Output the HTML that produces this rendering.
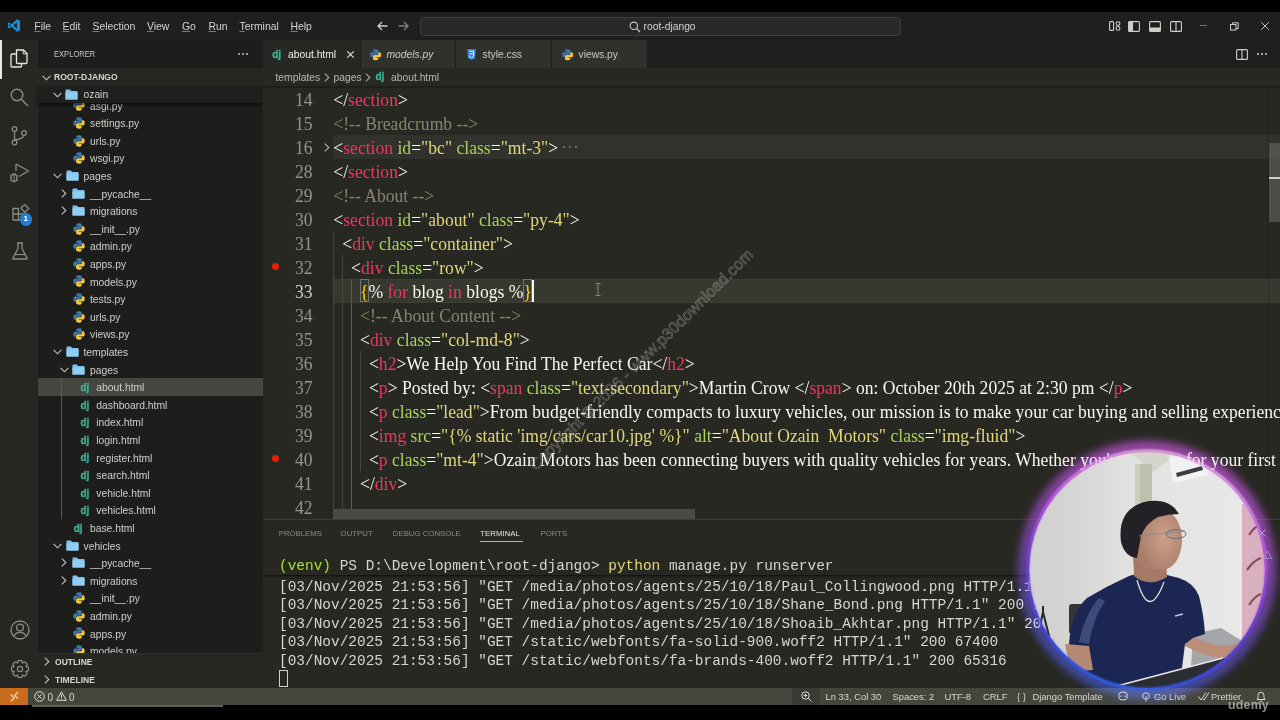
<!DOCTYPE html>
<html><head><meta charset="utf-8"><style>
*{box-sizing:border-box;margin:0;padding:0}
html,body{width:1280px;height:720px;overflow:hidden;background:#000}
body{position:relative;font-family:"Liberation Sans",sans-serif;color:#ccc}
.abs{position:absolute}
svg{position:absolute;overflow:visible}
#title{left:0;top:12px;width:1280px;height:28px;background:#1f1f1d}
.menu{position:absolute;top:20px;font-size:10.4px;color:#d2d2ce;line-height:13px;white-space:nowrap}
#act{left:0;top:40px;width:38px;height:648px;background:#262622}
#side{left:38px;top:40px;width:225px;height:648px;background:#1d1e1b;overflow:hidden}
.row{position:absolute;left:0;width:225px;height:17.6px;font-size:10.3px;line-height:17.6px;color:#cfcfca;white-space:nowrap}
.row span.tx{position:absolute;top:0}
.dj{position:absolute;font-family:"Liberation Sans",sans-serif;font-weight:bold;color:#3fae98;font-size:10px;letter-spacing:-0.2px;line-height:12px;-webkit-text-stroke:0.35px #3fae98}
#editor{left:263px;top:40px;width:1017px;height:479px;background:#272822;overflow:hidden}
.tab{position:absolute;top:0;height:27.5px;background:#30312c}
.tabt{position:absolute;font-size:10.3px;color:#c9c9c4;line-height:13px;white-space:nowrap}
.ln{position:absolute;left:0;width:49.5px;text-align:right;margin-top:1.2px;transform:scaleY(1.058);transform-origin:0 17.94px;font-family:"Liberation Serif",serif;font-size:17.6px;color:#8f8f89;line-height:24px}
.cl{position:absolute;left:70px;white-space:pre;margin-top:1.0px;transform:scaleY(1.058);transform-origin:0 17.94px;font-family:"Liberation Serif",serif;font-size:17.6px;color:#f8f8f2;line-height:24px}
.t{color:#ec3663}.a{color:#a6d55a}.s{color:#e3d778}.c{color:#88846f}.p{color:#f8f8f2}.y{color:#ffd700}
#panel{left:263px;top:519px;width:1017px;height:169px;background:#272822;overflow:hidden}
.ptab{position:absolute;top:529px;font-size:7.8px;color:#8a8a85;line-height:9px;white-space:nowrap}
.term{position:absolute;left:17px;white-space:pre;font-family:"Liberation Mono",monospace;font-size:14.44px;line-height:18.6px;color:#d6d6d0;transform:scaleY(1.07);transform-origin:0 50%}
#status{left:0;top:688px;width:1280px;height:17px;background:#44453d}
.st{position:absolute;top:692px;font-size:9.4px;color:#d8d8d2;line-height:10px;white-space:nowrap}
</style></head><body>
<div id="title" class="abs"></div>
<svg style="left:7px;top:19px" width="14" height="13" viewBox="0 0 100 100"><path fill="#1f8ad2" d="M72 2 L97 14 V86 L72 98 L31 60 L13 74 L3 69 V31 L13 26 L31 40 Z M72 27 L45 50 L72 73 Z M13 37 V63 L26 50 Z"/></svg>
<div class="menu" style="left:34.3px"><u style="text-decoration-color:#7a7a76">F</u>ile</div>
<div class="menu" style="left:62.5px"><u style="text-decoration-color:#7a7a76">E</u>dit</div>
<div class="menu" style="left:92.5px"><u style="text-decoration-color:#7a7a76">S</u>election</div>
<div class="menu" style="left:147px"><u style="text-decoration-color:#7a7a76">V</u>iew</div>
<div class="menu" style="left:182px"><u style="text-decoration-color:#7a7a76">G</u>o</div>
<div class="menu" style="left:208.5px"><u style="text-decoration-color:#7a7a76">R</u>un</div>
<div class="menu" style="left:239.5px"><u style="text-decoration-color:#7a7a76">T</u>erminal</div>
<div class="menu" style="left:290.5px"><u style="text-decoration-color:#7a7a76">H</u>elp</div>
<svg style="left:377px;top:21px" width="11" height="10" viewBox="0 0 11 10"><path d="M10.5 5H1.2M5 1 L1 5 L5 9" stroke="#d0d0cc" stroke-width="1.3" fill="none"/></svg>
<svg style="left:397.5px;top:21px" width="11" height="10" viewBox="0 0 11 10"><path d="M0.5 5H9.8M6 1 L10 5 L6 9" stroke="#7d7d79" stroke-width="1.3" fill="none"/></svg>
<div class="abs" style="left:420px;top:17px;width:481px;height:19px;border:1px solid #3d3d3a;border-radius:4px;background:#292927"></div>
<svg style="left:629px;top:20.5px" width="12" height="12" viewBox="0 0 12 12"><circle cx="4.8" cy="4.8" r="3.7" stroke="#c8c8c4" stroke-width="1.1" fill="none"/><path d="M7.5 7.5 L11 11" stroke="#c8c8c4" stroke-width="1.2"/></svg>
<div class="abs" style="left:643.5px;top:20px;font-size:10.3px;color:#d4d4d0;line-height:13px">root-django</div>
<svg style="left:1108.5px;top:21px" width="12" height="10" viewBox="0 0 12 10"><rect x="0.6" y="0.6" width="4" height="8.8" rx="1" stroke="#cfcfca" stroke-width="1.1" fill="none"/><circle cx="9" cy="2.6" r="1.9" stroke="#cfcfca" stroke-width="1.1" fill="none"/><circle cx="9" cy="7.4" r="1.9" stroke="#cfcfca" stroke-width="1.1" fill="none"/></svg>
<svg style="left:1128px;top:21px" width="12" height="11" viewBox="0 0 12 11"><rect x="0.6" y="0.6" width="10.8" height="9.8" rx="1" stroke="#cfcfca" stroke-width="1.1" fill="none"/><rect x="0.6" y="0.6" width="4.5" height="9.8" fill="#cfcfca"/></svg>
<svg style="left:1149px;top:21px" width="12" height="11" viewBox="0 0 12 11"><rect x="0.6" y="0.6" width="10.8" height="9.8" rx="1" stroke="#cfcfca" stroke-width="1.1" fill="none"/><rect x="0.6" y="6.5" width="10.8" height="3.9" fill="#cfcfca"/></svg>
<svg style="left:1170px;top:21px" width="12" height="11" viewBox="0 0 12 11"><rect x="0.6" y="0.6" width="10.8" height="9.8" rx="1" stroke="#cfcfca" stroke-width="1.1" fill="none"/><path d="M6 0.6V10.4" stroke="#cfcfca" stroke-width="1.1"/></svg>
<div class="abs" style="left:1200px;top:24.5px;width:7px;height:1px;background:#6f6f6b"></div>
<svg style="left:1230px;top:21.5px" width="9" height="9" viewBox="0 0 9 9"><rect x="0.5" y="2.5" width="5.5" height="5.5" stroke="#cfcfca" stroke-width="1" fill="none"/><path d="M2.5 2.5V0.8H8.2V6.5H6" stroke="#cfcfca" stroke-width="1" fill="none"/></svg>
<svg style="left:1261px;top:22px" width="8" height="8" viewBox="0 0 8 8"><path d="M0.3 0.3L7.7 7.7M7.7 0.3L0.3 7.7" stroke="#d6d6d2" stroke-width="0.9"/></svg>
<div id="act" class="abs"></div>
<div class="abs" style="left:0;top:40px;width:1.6px;height:39px;background:#e8e8e4"></div>
<svg style="left:10px;top:49px" width="18" height="19" viewBox="0 0 18 19"><path d="M6.5 1 H13.5 L17 4.5 V13.5 Q17 14.5 16 14.5 H7.5 Q6.5 14.5 6.5 13.5 Z" stroke="#e6e6e2" stroke-width="1.3" fill="none"/><path d="M13.2 1.2 V4.8 H16.8" stroke="#e6e6e2" stroke-width="1" fill="none"/><path d="M6.5 5 H2 Q1 5 1 6 V17 Q1 18 2 18 H10.5 Q11.5 18 11.5 17 V14.5" stroke="#e6e6e2" stroke-width="1.3" fill="none"/></svg>
<svg style="left:10px;top:88px" width="19" height="19" viewBox="0 0 19 19"><circle cx="7" cy="7" r="5.8" stroke="#8c8c87" stroke-width="1.4" fill="none"/><path d="M11.3 11.3 L18 18" stroke="#8c8c87" stroke-width="1.5"/></svg>
<svg style="left:11px;top:126px" width="17" height="20" viewBox="0 0 17 20"><circle cx="3.5" cy="3" r="2.3" stroke="#8c8c87" stroke-width="1.3" fill="none"/><circle cx="3.5" cy="16.5" r="2.3" stroke="#8c8c87" stroke-width="1.3" fill="none"/><circle cx="13" cy="7" r="2.3" stroke="#8c8c87" stroke-width="1.3" fill="none"/><path d="M3.5 5.3 V14.2 M13 9.3 Q13 12.5 3.8 14" stroke="#8c8c87" stroke-width="1.3" fill="none"/></svg>
<svg style="left:9px;top:163px" width="20" height="20" viewBox="0 0 20 20"><path d="M7 1 L19.5 8 L10 13.5" stroke="#8c8c87" stroke-width="1.3" fill="none" stroke-linejoin="round"/><path d="M7 1 V8" stroke="#8c8c87" stroke-width="1.3"/><ellipse cx="5" cy="15" rx="3" ry="3.6" stroke="#8c8c87" stroke-width="1.2" fill="none"/><path d="M1 12.5 L2.4 13.3 M1 15 H2 M1 17.8 L2.4 17 M9 12.5 L7.6 13.3 M9 15 H8 M9 17.8 L7.6 17 M5 11.4 V18.6 M3.5 10 L4.5 11.5 M6.5 10 L5.5 11.5" stroke="#8c8c87" stroke-width="1" fill="none"/></svg>
<svg style="left:11.5px;top:203.5px" width="18" height="17" viewBox="0 0 18 17"><path d="M1 4.5 H6.5 V10 H12 V16 H1 Z M1 10 H6.5 V16 M9 4 L12.5 0.6 L16.8 4.5 L12.5 8.4 Z" stroke="#8c8c87" stroke-width="1.3" fill="none" stroke-linejoin="round"/></svg>
<div class="abs" style="left:19.5px;top:213px;width:12.5px;height:12.5px;border-radius:50%;background:#1f7fd4;color:#fff;font-size:8px;font-weight:bold;line-height:12.5px;text-align:center">1</div>
<svg style="left:11.5px;top:242px" width="16" height="18" viewBox="0 0 16 18"><path d="M5 1 H11 M6 1 V6.5 L1 16 Q0.7 17 1.8 17 H14.2 Q15.3 17 15 16 L10 6.5 V1" stroke="#8c8c87" stroke-width="1.3" fill="none" stroke-linejoin="round"/><path d="M3 12.5 H13" stroke="#8c8c87" stroke-width="1.2"/></svg>
<svg style="left:9.5px;top:620px" width="20" height="20" viewBox="0 0 20 20"><circle cx="10" cy="10" r="9" stroke="#8c8c87" stroke-width="1.3" fill="none"/><circle cx="10" cy="7.5" r="3.4" stroke="#8c8c87" stroke-width="1.3" fill="none"/><path d="M4 16.3 Q5.5 12.3 10 12.3 Q14.5 12.3 16 16.3" stroke="#8c8c87" stroke-width="1.3" fill="none"/></svg>
<svg style="left:10px;top:659px" width="20" height="20" viewBox="0 0 20 20"><path d="M18.39 8.12 L18.39 11.88 L15.84 12.61 L15.98 12.29 L17.26 14.61 L14.61 17.26 L12.29 15.98 L12.61 15.84 L11.88 18.39 L8.12 18.39 L7.39 15.84 L7.71 15.98 L5.39 17.26 L2.74 14.61 L4.02 12.29 L4.16 12.61 L1.61 11.88 L1.61 8.12 L4.16 7.39 L4.02 7.71 L2.74 5.39 L5.39 2.74 L7.71 4.02 L7.39 4.16 L8.12 1.61 L11.88 1.61 L12.61 4.16 L12.29 4.02 L14.61 2.74 L17.26 5.39 L15.98 7.71 L15.84 7.39Z" stroke="#8c8c87" stroke-width="1.2" fill="none" stroke-linejoin="round"/><circle cx="10" cy="10" r="2.6" stroke="#8c8c87" stroke-width="1.2" fill="none"/></svg>
<div id="side" class="abs"></div>
<div class="abs" style="left:54.3px;top:49.5px;font-size:8.4px;color:#c8c8c3;line-height:9px;letter-spacing:0.1px;transform:scaleX(0.89);transform-origin:0 50%">EXPLORER</div>
<div class="abs" style="left:238px;top:53px;width:2px;height:2px;background:#c8c8c3;border-radius:1px"></div>
<div class="abs" style="left:242px;top:53px;width:2px;height:2px;background:#c8c8c3;border-radius:1px"></div>
<div class="abs" style="left:246px;top:53px;width:2px;height:2px;background:#c8c8c3;border-radius:1px"></div>
<div class="abs" style="left:38px;top:103px;width:225px;height:549.5px;overflow:hidden;background:#1d1e1b">
<svg style="left:34.8px;top:-3.6999999999999993px" width="12" height="12" viewBox="0 0 12 12"><path d="M5.9 0.3 C3.2 0.3 3.4 1.5 3.4 1.5 V2.9 H6.1 V3.4 H2.2 C2.2 3.4 0.3 3.2 0.3 6 C0.3 8.8 2 8.7 2 8.7 H3 V7.4 C3 7.4 2.9 5.7 4.7 5.7 H7.3 C7.3 5.7 8.9 5.7 8.9 4.1 V1.9 C8.9 1.9 9.2 0.3 5.9 0.3 Z" fill="#3b77a8"/><path d="M6.1 11.7 C8.8 11.7 8.6 10.5 8.6 10.5 V9.1 H5.9 V8.6 H9.8 C9.8 8.6 11.7 8.8 11.7 6 C11.7 3.2 10 3.3 10 3.3 H9 V4.6 C9 4.6 9.1 6.3 7.3 6.3 H4.7 C4.7 6.3 3.1 6.3 3.1 7.9 V10.1 C3.1 10.1 2.8 11.7 6.1 11.7 Z" fill="#f3c93c"/></svg>
<div class="row" style="top:-5.50px"><span class="tx" style="left:52px">asgi.py</span></div>
<svg style="left:34.8px;top:13.900000000000002px" width="12" height="12" viewBox="0 0 12 12"><path d="M5.9 0.3 C3.2 0.3 3.4 1.5 3.4 1.5 V2.9 H6.1 V3.4 H2.2 C2.2 3.4 0.3 3.2 0.3 6 C0.3 8.8 2 8.7 2 8.7 H3 V7.4 C3 7.4 2.9 5.7 4.7 5.7 H7.3 C7.3 5.7 8.9 5.7 8.9 4.1 V1.9 C8.9 1.9 9.2 0.3 5.9 0.3 Z" fill="#3b77a8"/><path d="M6.1 11.7 C8.8 11.7 8.6 10.5 8.6 10.5 V9.1 H5.9 V8.6 H9.8 C9.8 8.6 11.7 8.8 11.7 6 C11.7 3.2 10 3.3 10 3.3 H9 V4.6 C9 4.6 9.1 6.3 7.3 6.3 H4.7 C4.7 6.3 3.1 6.3 3.1 7.9 V10.1 C3.1 10.1 2.8 11.7 6.1 11.7 Z" fill="#f3c93c"/></svg>
<div class="row" style="top:12.10px"><span class="tx" style="left:52px">settings.py</span></div>
<svg style="left:34.8px;top:31.5px" width="12" height="12" viewBox="0 0 12 12"><path d="M5.9 0.3 C3.2 0.3 3.4 1.5 3.4 1.5 V2.9 H6.1 V3.4 H2.2 C2.2 3.4 0.3 3.2 0.3 6 C0.3 8.8 2 8.7 2 8.7 H3 V7.4 C3 7.4 2.9 5.7 4.7 5.7 H7.3 C7.3 5.7 8.9 5.7 8.9 4.1 V1.9 C8.9 1.9 9.2 0.3 5.9 0.3 Z" fill="#3b77a8"/><path d="M6.1 11.7 C8.8 11.7 8.6 10.5 8.6 10.5 V9.1 H5.9 V8.6 H9.8 C9.8 8.6 11.7 8.8 11.7 6 C11.7 3.2 10 3.3 10 3.3 H9 V4.6 C9 4.6 9.1 6.3 7.3 6.3 H4.7 C4.7 6.3 3.1 6.3 3.1 7.9 V10.1 C3.1 10.1 2.8 11.7 6.1 11.7 Z" fill="#f3c93c"/></svg>
<div class="row" style="top:29.70px"><span class="tx" style="left:52px">urls.py</span></div>
<svg style="left:34.8px;top:49.10000000000001px" width="12" height="12" viewBox="0 0 12 12"><path d="M5.9 0.3 C3.2 0.3 3.4 1.5 3.4 1.5 V2.9 H6.1 V3.4 H2.2 C2.2 3.4 0.3 3.2 0.3 6 C0.3 8.8 2 8.7 2 8.7 H3 V7.4 C3 7.4 2.9 5.7 4.7 5.7 H7.3 C7.3 5.7 8.9 5.7 8.9 4.1 V1.9 C8.9 1.9 9.2 0.3 5.9 0.3 Z" fill="#3b77a8"/><path d="M6.1 11.7 C8.8 11.7 8.6 10.5 8.6 10.5 V9.1 H5.9 V8.6 H9.8 C9.8 8.6 11.7 8.8 11.7 6 C11.7 3.2 10 3.3 10 3.3 H9 V4.6 C9 4.6 9.1 6.3 7.3 6.3 H4.7 C4.7 6.3 3.1 6.3 3.1 7.9 V10.1 C3.1 10.1 2.8 11.7 6.1 11.7 Z" fill="#f3c93c"/></svg>
<div class="row" style="top:47.30px"><span class="tx" style="left:52px">wsgi.py</span></div>
<svg style="left:15px;top:70.2px" width="9" height="6" viewBox="0 0 9 6"><path d="M0.6 0.8 L4.5 4.8 L8.4 0.8" stroke="#c5c5c0" stroke-width="1.1" fill="none"/></svg>
<svg style="left:28px;top:67.2px" width="13" height="11" viewBox="0 0 13 11"><path d="M0.5 1.3 Q0.5 0.5 1.3 0.5 H4.8 L6.2 2 H11.7 Q12.5 2 12.5 2.8 V10 Q12.5 10.5 12 10.5 H1 Q0.5 10.5 0.5 10 Z" fill="#7fc1ec"/><path d="M0.5 3.5 H12.5 V10 Q12.5 10.5 12 10.5 H1 Q0.5 10.5 0.5 10 Z" fill="#90cdf4"/></svg>
<div class="row" style="top:64.90px"><span class="tx" style="left:45.5px">pages</span></div>
<svg style="left:23px;top:85.8px" width="6" height="9" viewBox="0 0 6 9"><path d="M0.8 0.6 L4.8 4.5 L0.8 8.4" stroke="#c5c5c0" stroke-width="1.1" fill="none"/></svg>
<svg style="left:34px;top:84.8px" width="13" height="11" viewBox="0 0 13 11"><path d="M0.5 1.3 Q0.5 0.5 1.3 0.5 H4.8 L6.2 2 H11.7 Q12.5 2 12.5 2.8 V10 Q12.5 10.5 12 10.5 H1 Q0.5 10.5 0.5 10 Z" fill="#7fc1ec"/><path d="M0.5 3.5 H12.5 V10 Q12.5 10.5 12 10.5 H1 Q0.5 10.5 0.5 10 Z" fill="#90cdf4"/></svg>
<div class="row" style="top:82.50px"><span class="tx" style="left:52px">__pycache__</span></div>
<svg style="left:23px;top:103.4px" width="6" height="9" viewBox="0 0 6 9"><path d="M0.8 0.6 L4.8 4.5 L0.8 8.4" stroke="#c5c5c0" stroke-width="1.1" fill="none"/></svg>
<svg style="left:34px;top:102.4px" width="13" height="11" viewBox="0 0 13 11"><path d="M0.5 1.3 Q0.5 0.5 1.3 0.5 H4.8 L6.2 2 H11.7 Q12.5 2 12.5 2.8 V10 Q12.5 10.5 12 10.5 H1 Q0.5 10.5 0.5 10 Z" fill="#7fc1ec"/><path d="M0.5 3.5 H12.5 V10 Q12.5 10.5 12 10.5 H1 Q0.5 10.5 0.5 10 Z" fill="#90cdf4"/></svg>
<div class="row" style="top:100.10px"><span class="tx" style="left:52px">migrations</span></div>
<svg style="left:34.8px;top:119.50000000000001px" width="12" height="12" viewBox="0 0 12 12"><path d="M5.9 0.3 C3.2 0.3 3.4 1.5 3.4 1.5 V2.9 H6.1 V3.4 H2.2 C2.2 3.4 0.3 3.2 0.3 6 C0.3 8.8 2 8.7 2 8.7 H3 V7.4 C3 7.4 2.9 5.7 4.7 5.7 H7.3 C7.3 5.7 8.9 5.7 8.9 4.1 V1.9 C8.9 1.9 9.2 0.3 5.9 0.3 Z" fill="#3b77a8"/><path d="M6.1 11.7 C8.8 11.7 8.6 10.5 8.6 10.5 V9.1 H5.9 V8.6 H9.8 C9.8 8.6 11.7 8.8 11.7 6 C11.7 3.2 10 3.3 10 3.3 H9 V4.6 C9 4.6 9.1 6.3 7.3 6.3 H4.7 C4.7 6.3 3.1 6.3 3.1 7.9 V10.1 C3.1 10.1 2.8 11.7 6.1 11.7 Z" fill="#f3c93c"/></svg>
<div class="row" style="top:117.70px"><span class="tx" style="left:52px">__init__.py</span></div>
<svg style="left:34.8px;top:137.10000000000002px" width="12" height="12" viewBox="0 0 12 12"><path d="M5.9 0.3 C3.2 0.3 3.4 1.5 3.4 1.5 V2.9 H6.1 V3.4 H2.2 C2.2 3.4 0.3 3.2 0.3 6 C0.3 8.8 2 8.7 2 8.7 H3 V7.4 C3 7.4 2.9 5.7 4.7 5.7 H7.3 C7.3 5.7 8.9 5.7 8.9 4.1 V1.9 C8.9 1.9 9.2 0.3 5.9 0.3 Z" fill="#3b77a8"/><path d="M6.1 11.7 C8.8 11.7 8.6 10.5 8.6 10.5 V9.1 H5.9 V8.6 H9.8 C9.8 8.6 11.7 8.8 11.7 6 C11.7 3.2 10 3.3 10 3.3 H9 V4.6 C9 4.6 9.1 6.3 7.3 6.3 H4.7 C4.7 6.3 3.1 6.3 3.1 7.9 V10.1 C3.1 10.1 2.8 11.7 6.1 11.7 Z" fill="#f3c93c"/></svg>
<div class="row" style="top:135.30px"><span class="tx" style="left:52px">admin.py</span></div>
<svg style="left:34.8px;top:154.70000000000002px" width="12" height="12" viewBox="0 0 12 12"><path d="M5.9 0.3 C3.2 0.3 3.4 1.5 3.4 1.5 V2.9 H6.1 V3.4 H2.2 C2.2 3.4 0.3 3.2 0.3 6 C0.3 8.8 2 8.7 2 8.7 H3 V7.4 C3 7.4 2.9 5.7 4.7 5.7 H7.3 C7.3 5.7 8.9 5.7 8.9 4.1 V1.9 C8.9 1.9 9.2 0.3 5.9 0.3 Z" fill="#3b77a8"/><path d="M6.1 11.7 C8.8 11.7 8.6 10.5 8.6 10.5 V9.1 H5.9 V8.6 H9.8 C9.8 8.6 11.7 8.8 11.7 6 C11.7 3.2 10 3.3 10 3.3 H9 V4.6 C9 4.6 9.1 6.3 7.3 6.3 H4.7 C4.7 6.3 3.1 6.3 3.1 7.9 V10.1 C3.1 10.1 2.8 11.7 6.1 11.7 Z" fill="#f3c93c"/></svg>
<div class="row" style="top:152.90px"><span class="tx" style="left:52px">apps.py</span></div>
<svg style="left:34.8px;top:172.3px" width="12" height="12" viewBox="0 0 12 12"><path d="M5.9 0.3 C3.2 0.3 3.4 1.5 3.4 1.5 V2.9 H6.1 V3.4 H2.2 C2.2 3.4 0.3 3.2 0.3 6 C0.3 8.8 2 8.7 2 8.7 H3 V7.4 C3 7.4 2.9 5.7 4.7 5.7 H7.3 C7.3 5.7 8.9 5.7 8.9 4.1 V1.9 C8.9 1.9 9.2 0.3 5.9 0.3 Z" fill="#3b77a8"/><path d="M6.1 11.7 C8.8 11.7 8.6 10.5 8.6 10.5 V9.1 H5.9 V8.6 H9.8 C9.8 8.6 11.7 8.8 11.7 6 C11.7 3.2 10 3.3 10 3.3 H9 V4.6 C9 4.6 9.1 6.3 7.3 6.3 H4.7 C4.7 6.3 3.1 6.3 3.1 7.9 V10.1 C3.1 10.1 2.8 11.7 6.1 11.7 Z" fill="#f3c93c"/></svg>
<div class="row" style="top:170.50px"><span class="tx" style="left:52px">models.py</span></div>
<svg style="left:34.8px;top:189.90000000000003px" width="12" height="12" viewBox="0 0 12 12"><path d="M5.9 0.3 C3.2 0.3 3.4 1.5 3.4 1.5 V2.9 H6.1 V3.4 H2.2 C2.2 3.4 0.3 3.2 0.3 6 C0.3 8.8 2 8.7 2 8.7 H3 V7.4 C3 7.4 2.9 5.7 4.7 5.7 H7.3 C7.3 5.7 8.9 5.7 8.9 4.1 V1.9 C8.9 1.9 9.2 0.3 5.9 0.3 Z" fill="#3b77a8"/><path d="M6.1 11.7 C8.8 11.7 8.6 10.5 8.6 10.5 V9.1 H5.9 V8.6 H9.8 C9.8 8.6 11.7 8.8 11.7 6 C11.7 3.2 10 3.3 10 3.3 H9 V4.6 C9 4.6 9.1 6.3 7.3 6.3 H4.7 C4.7 6.3 3.1 6.3 3.1 7.9 V10.1 C3.1 10.1 2.8 11.7 6.1 11.7 Z" fill="#f3c93c"/></svg>
<div class="row" style="top:188.10px"><span class="tx" style="left:52px">tests.py</span></div>
<svg style="left:34.8px;top:207.50000000000003px" width="12" height="12" viewBox="0 0 12 12"><path d="M5.9 0.3 C3.2 0.3 3.4 1.5 3.4 1.5 V2.9 H6.1 V3.4 H2.2 C2.2 3.4 0.3 3.2 0.3 6 C0.3 8.8 2 8.7 2 8.7 H3 V7.4 C3 7.4 2.9 5.7 4.7 5.7 H7.3 C7.3 5.7 8.9 5.7 8.9 4.1 V1.9 C8.9 1.9 9.2 0.3 5.9 0.3 Z" fill="#3b77a8"/><path d="M6.1 11.7 C8.8 11.7 8.6 10.5 8.6 10.5 V9.1 H5.9 V8.6 H9.8 C9.8 8.6 11.7 8.8 11.7 6 C11.7 3.2 10 3.3 10 3.3 H9 V4.6 C9 4.6 9.1 6.3 7.3 6.3 H4.7 C4.7 6.3 3.1 6.3 3.1 7.9 V10.1 C3.1 10.1 2.8 11.7 6.1 11.7 Z" fill="#f3c93c"/></svg>
<div class="row" style="top:205.70px"><span class="tx" style="left:52px">urls.py</span></div>
<svg style="left:34.8px;top:225.10000000000002px" width="12" height="12" viewBox="0 0 12 12"><path d="M5.9 0.3 C3.2 0.3 3.4 1.5 3.4 1.5 V2.9 H6.1 V3.4 H2.2 C2.2 3.4 0.3 3.2 0.3 6 C0.3 8.8 2 8.7 2 8.7 H3 V7.4 C3 7.4 2.9 5.7 4.7 5.7 H7.3 C7.3 5.7 8.9 5.7 8.9 4.1 V1.9 C8.9 1.9 9.2 0.3 5.9 0.3 Z" fill="#3b77a8"/><path d="M6.1 11.7 C8.8 11.7 8.6 10.5 8.6 10.5 V9.1 H5.9 V8.6 H9.8 C9.8 8.6 11.7 8.8 11.7 6 C11.7 3.2 10 3.3 10 3.3 H9 V4.6 C9 4.6 9.1 6.3 7.3 6.3 H4.7 C4.7 6.3 3.1 6.3 3.1 7.9 V10.1 C3.1 10.1 2.8 11.7 6.1 11.7 Z" fill="#f3c93c"/></svg>
<div class="row" style="top:223.30px"><span class="tx" style="left:52px">views.py</span></div>
<svg style="left:15px;top:246.20000000000005px" width="9" height="6" viewBox="0 0 9 6"><path d="M0.6 0.8 L4.5 4.8 L8.4 0.8" stroke="#c5c5c0" stroke-width="1.1" fill="none"/></svg>
<svg style="left:28px;top:243.20000000000005px" width="13" height="11" viewBox="0 0 13 11"><path d="M0.5 1.3 Q0.5 0.5 1.3 0.5 H4.8 L6.2 2 H11.7 Q12.5 2 12.5 2.8 V10 Q12.5 10.5 12 10.5 H1 Q0.5 10.5 0.5 10 Z" fill="#7fc1ec"/><path d="M0.5 3.5 H12.5 V10 Q12.5 10.5 12 10.5 H1 Q0.5 10.5 0.5 10 Z" fill="#90cdf4"/></svg>
<div class="row" style="top:240.90px"><span class="tx" style="left:45.5px">templates</span></div>
<svg style="left:22px;top:263.8px" width="9" height="6" viewBox="0 0 9 6"><path d="M0.6 0.8 L4.5 4.8 L8.4 0.8" stroke="#c5c5c0" stroke-width="1.1" fill="none"/></svg>
<svg style="left:34px;top:260.8px" width="13" height="11" viewBox="0 0 13 11"><path d="M0.5 1.3 Q0.5 0.5 1.3 0.5 H4.8 L6.2 2 H11.7 Q12.5 2 12.5 2.8 V10 Q12.5 10.5 12 10.5 H1 Q0.5 10.5 0.5 10 Z" fill="#7fc1ec"/><path d="M0.5 3.5 H12.5 V10 Q12.5 10.5 12 10.5 H1 Q0.5 10.5 0.5 10 Z" fill="#90cdf4"/></svg>
<div class="row" style="top:258.50px"><span class="tx" style="left:52px">pages</span></div>
<div class="abs" style="left:0;top:275.10px;width:225px;height:17.6px;background:#45463f"></div>
<div class="dj" style="left:42.5px;top:278.90000000000003px">dj</div>
<div class="row" style="top:276.10px"><span class="tx" style="left:58.3px">about.html</span></div>
<div class="dj" style="left:42.5px;top:296.50000000000006px">dj</div>
<div class="row" style="top:293.70px"><span class="tx" style="left:58.3px">dashboard.html</span></div>
<div class="dj" style="left:42.5px;top:314.1px">dj</div>
<div class="row" style="top:311.30px"><span class="tx" style="left:58.3px">index.html</span></div>
<div class="dj" style="left:42.5px;top:331.70000000000005px">dj</div>
<div class="row" style="top:328.90px"><span class="tx" style="left:58.3px">login.html</span></div>
<div class="dj" style="left:42.5px;top:349.3px">dj</div>
<div class="row" style="top:346.50px"><span class="tx" style="left:58.3px">register.html</span></div>
<div class="dj" style="left:42.5px;top:366.90000000000003px">dj</div>
<div class="row" style="top:364.10px"><span class="tx" style="left:58.3px">search.html</span></div>
<div class="dj" style="left:42.5px;top:384.50000000000006px">dj</div>
<div class="row" style="top:381.70px"><span class="tx" style="left:58.3px">vehicle.html</span></div>
<div class="dj" style="left:42.5px;top:402.1px">dj</div>
<div class="row" style="top:399.30px"><span class="tx" style="left:58.3px">vehicles.html</span></div>
<div class="dj" style="left:35.8px;top:419.70000000000005px">dj</div>
<div class="row" style="top:416.90px"><span class="tx" style="left:52px">base.html</span></div>
<svg style="left:15px;top:439.80000000000007px" width="9" height="6" viewBox="0 0 9 6"><path d="M0.6 0.8 L4.5 4.8 L8.4 0.8" stroke="#c5c5c0" stroke-width="1.1" fill="none"/></svg>
<svg style="left:28px;top:436.80000000000007px" width="13" height="11" viewBox="0 0 13 11"><path d="M0.5 1.3 Q0.5 0.5 1.3 0.5 H4.8 L6.2 2 H11.7 Q12.5 2 12.5 2.8 V10 Q12.5 10.5 12 10.5 H1 Q0.5 10.5 0.5 10 Z" fill="#7fc1ec"/><path d="M0.5 3.5 H12.5 V10 Q12.5 10.5 12 10.5 H1 Q0.5 10.5 0.5 10 Z" fill="#90cdf4"/></svg>
<div class="row" style="top:434.50px"><span class="tx" style="left:45.5px">vehicles</span></div>
<svg style="left:23px;top:455.40000000000003px" width="6" height="9" viewBox="0 0 6 9"><path d="M0.8 0.6 L4.8 4.5 L0.8 8.4" stroke="#c5c5c0" stroke-width="1.1" fill="none"/></svg>
<svg style="left:34px;top:454.40000000000003px" width="13" height="11" viewBox="0 0 13 11"><path d="M0.5 1.3 Q0.5 0.5 1.3 0.5 H4.8 L6.2 2 H11.7 Q12.5 2 12.5 2.8 V10 Q12.5 10.5 12 10.5 H1 Q0.5 10.5 0.5 10 Z" fill="#7fc1ec"/><path d="M0.5 3.5 H12.5 V10 Q12.5 10.5 12 10.5 H1 Q0.5 10.5 0.5 10 Z" fill="#90cdf4"/></svg>
<div class="row" style="top:452.10px"><span class="tx" style="left:52px">__pycache__</span></div>
<svg style="left:23px;top:473.00000000000006px" width="6" height="9" viewBox="0 0 6 9"><path d="M0.8 0.6 L4.8 4.5 L0.8 8.4" stroke="#c5c5c0" stroke-width="1.1" fill="none"/></svg>
<svg style="left:34px;top:472.00000000000006px" width="13" height="11" viewBox="0 0 13 11"><path d="M0.5 1.3 Q0.5 0.5 1.3 0.5 H4.8 L6.2 2 H11.7 Q12.5 2 12.5 2.8 V10 Q12.5 10.5 12 10.5 H1 Q0.5 10.5 0.5 10 Z" fill="#7fc1ec"/><path d="M0.5 3.5 H12.5 V10 Q12.5 10.5 12 10.5 H1 Q0.5 10.5 0.5 10 Z" fill="#90cdf4"/></svg>
<div class="row" style="top:469.70px"><span class="tx" style="left:52px">migrations</span></div>
<svg style="left:34.8px;top:489.1000000000001px" width="12" height="12" viewBox="0 0 12 12"><path d="M5.9 0.3 C3.2 0.3 3.4 1.5 3.4 1.5 V2.9 H6.1 V3.4 H2.2 C2.2 3.4 0.3 3.2 0.3 6 C0.3 8.8 2 8.7 2 8.7 H3 V7.4 C3 7.4 2.9 5.7 4.7 5.7 H7.3 C7.3 5.7 8.9 5.7 8.9 4.1 V1.9 C8.9 1.9 9.2 0.3 5.9 0.3 Z" fill="#3b77a8"/><path d="M6.1 11.7 C8.8 11.7 8.6 10.5 8.6 10.5 V9.1 H5.9 V8.6 H9.8 C9.8 8.6 11.7 8.8 11.7 6 C11.7 3.2 10 3.3 10 3.3 H9 V4.6 C9 4.6 9.1 6.3 7.3 6.3 H4.7 C4.7 6.3 3.1 6.3 3.1 7.9 V10.1 C3.1 10.1 2.8 11.7 6.1 11.7 Z" fill="#f3c93c"/></svg>
<div class="row" style="top:487.30px"><span class="tx" style="left:52px">__init__.py</span></div>
<svg style="left:34.8px;top:506.70000000000005px" width="12" height="12" viewBox="0 0 12 12"><path d="M5.9 0.3 C3.2 0.3 3.4 1.5 3.4 1.5 V2.9 H6.1 V3.4 H2.2 C2.2 3.4 0.3 3.2 0.3 6 C0.3 8.8 2 8.7 2 8.7 H3 V7.4 C3 7.4 2.9 5.7 4.7 5.7 H7.3 C7.3 5.7 8.9 5.7 8.9 4.1 V1.9 C8.9 1.9 9.2 0.3 5.9 0.3 Z" fill="#3b77a8"/><path d="M6.1 11.7 C8.8 11.7 8.6 10.5 8.6 10.5 V9.1 H5.9 V8.6 H9.8 C9.8 8.6 11.7 8.8 11.7 6 C11.7 3.2 10 3.3 10 3.3 H9 V4.6 C9 4.6 9.1 6.3 7.3 6.3 H4.7 C4.7 6.3 3.1 6.3 3.1 7.9 V10.1 C3.1 10.1 2.8 11.7 6.1 11.7 Z" fill="#f3c93c"/></svg>
<div class="row" style="top:504.90px"><span class="tx" style="left:52px">admin.py</span></div>
<svg style="left:34.8px;top:524.3px" width="12" height="12" viewBox="0 0 12 12"><path d="M5.9 0.3 C3.2 0.3 3.4 1.5 3.4 1.5 V2.9 H6.1 V3.4 H2.2 C2.2 3.4 0.3 3.2 0.3 6 C0.3 8.8 2 8.7 2 8.7 H3 V7.4 C3 7.4 2.9 5.7 4.7 5.7 H7.3 C7.3 5.7 8.9 5.7 8.9 4.1 V1.9 C8.9 1.9 9.2 0.3 5.9 0.3 Z" fill="#3b77a8"/><path d="M6.1 11.7 C8.8 11.7 8.6 10.5 8.6 10.5 V9.1 H5.9 V8.6 H9.8 C9.8 8.6 11.7 8.8 11.7 6 C11.7 3.2 10 3.3 10 3.3 H9 V4.6 C9 4.6 9.1 6.3 7.3 6.3 H4.7 C4.7 6.3 3.1 6.3 3.1 7.9 V10.1 C3.1 10.1 2.8 11.7 6.1 11.7 Z" fill="#f3c93c"/></svg>
<div class="row" style="top:522.50px"><span class="tx" style="left:52px">apps.py</span></div>
<svg style="left:34.8px;top:541.9px" width="12" height="12" viewBox="0 0 12 12"><path d="M5.9 0.3 C3.2 0.3 3.4 1.5 3.4 1.5 V2.9 H6.1 V3.4 H2.2 C2.2 3.4 0.3 3.2 0.3 6 C0.3 8.8 2 8.7 2 8.7 H3 V7.4 C3 7.4 2.9 5.7 4.7 5.7 H7.3 C7.3 5.7 8.9 5.7 8.9 4.1 V1.9 C8.9 1.9 9.2 0.3 5.9 0.3 Z" fill="#3b77a8"/><path d="M6.1 11.7 C8.8 11.7 8.6 10.5 8.6 10.5 V9.1 H5.9 V8.6 H9.8 C9.8 8.6 11.7 8.8 11.7 6 C11.7 3.2 10 3.3 10 3.3 H9 V4.6 C9 4.6 9.1 6.3 7.3 6.3 H4.7 C4.7 6.3 3.1 6.3 3.1 7.9 V10.1 C3.1 10.1 2.8 11.7 6.1 11.7 Z" fill="#f3c93c"/></svg>
<div class="row" style="top:540.10px"><span class="tx" style="left:52px">models.py</span></div>
<div class="abs" style="left:23px;top:274.5px;width:1px;height:141px;background:#5a5a55"></div>
</div>
<div class="abs" style="left:38px;top:68.2px;width:225px;height:17.5px;background:#262622"></div>
<svg style="left:42px;top:74.5px" width="9" height="6" viewBox="0 0 9 6"><path d="M0.6 0.8 L4.5 4.8 L8.4 0.8" stroke="#c5c5c0" stroke-width="1.1" fill="none"/></svg>
<div class="abs" style="left:54.3px;top:71.5px;font-size:9.3px;font-weight:bold;color:#d6d6d1;line-height:10px;transform:scaleX(0.92);transform-origin:0 50%">ROOT-DJANGO</div>
<div class="abs" style="left:38px;top:85.7px;width:225px;height:17.6px;background:#1f201d;box-shadow:0 2px 3px rgba(0,0,0,0.55)"></div>
<svg style="left:53px;top:92px" width="9" height="6" viewBox="0 0 9 6"><path d="M0.6 0.8 L4.5 4.8 L8.4 0.8" stroke="#c5c5c0" stroke-width="1.1" fill="none"/></svg>
<svg style="left:65px;top:89px" width="13" height="11" viewBox="0 0 13 11"><path d="M0.5 1.3 Q0.5 0.5 1.3 0.5 H4.8 L6.2 2 H11.7 Q12.5 2 12.5 2.8 V10 Q12.5 10.5 12 10.5 H1 Q0.5 10.5 0.5 10 Z" fill="#7fc1ec"/><path d="M0.5 3.5 H12.5 V10 Q12.5 10.5 12 10.5 H1 Q0.5 10.5 0.5 10 Z" fill="#90cdf4"/></svg>
<div class="row" style="left:38px;top:85.7px"><span class="tx" style="left:45.5px">ozain</span></div>
<div class="abs" style="left:38px;top:652.5px;width:225px;height:35.5px;background:#262622"></div>
<div class="abs" style="left:38px;top:652.5px;width:225px;height:1px;background:#2e2f2a"></div>
<svg style="left:44px;top:657px" width="6" height="9" viewBox="0 0 6 9"><path d="M0.8 0.6 L4.8 4.5 L0.8 8.4" stroke="#c5c5c0" stroke-width="1.1" fill="none"/></svg>
<div class="abs" style="left:54.5px;top:656.5px;font-size:9.3px;font-weight:bold;color:#d6d6d1;line-height:10px;transform:scaleX(0.92);transform-origin:0 50%">OUTLINE</div>
<svg style="left:44px;top:675px" width="6" height="9" viewBox="0 0 6 9"><path d="M0.8 0.6 L4.8 4.5 L0.8 8.4" stroke="#c5c5c0" stroke-width="1.1" fill="none"/></svg>
<div class="abs" style="left:54.5px;top:674.5px;font-size:9.3px;font-weight:bold;color:#d6d6d1;line-height:10px;transform:scaleX(0.92);transform-origin:0 50%">TIMELINE</div>
<div id="editor" class="abs">
<div class="abs" style="left:0;top:0;width:1017px;height:27.5px;background:#1e1f1c"></div>
<div class="tab" style="left:0px;width:97px;background:#272823"></div>
<div class="tab" style="left:98px;width:94px;background:#30312c"></div>
<div class="tab" style="left:193px;width:95px;background:#30312c"></div>
<div class="tab" style="left:289px;width:95px;background:#30312c"></div>
<div class="dj" style="left:9.300000000000011px;top:8.5px">dj</div>
<div class="tabt" style="left:25px;top:8px;color:#f0f0ec">about.html</div>
<svg style="left:83.5px;top:11px" width="7" height="7" viewBox="0 0 7 7"><path d="M0.3 0.3L6.7 6.7M6.7 0.3L0.3 6.7" stroke="#e6e6e2" stroke-width="1.1"/></svg>
<svg style="left:107px;top:9px" width="11.5" height="11.5" viewBox="0 0 12 12"><path d="M5.9 0.3 C3.2 0.3 3.4 1.5 3.4 1.5 V2.9 H6.1 V3.4 H2.2 C2.2 3.4 0.3 3.2 0.3 6 C0.3 8.8 2 8.7 2 8.7 H3 V7.4 C3 7.4 2.9 5.7 4.7 5.7 H7.3 C7.3 5.7 8.9 5.7 8.9 4.1 V1.9 C8.9 1.9 9.2 0.3 5.9 0.3 Z" fill="#3b77a8"/><path d="M6.1 11.7 C8.8 11.7 8.6 10.5 8.6 10.5 V9.1 H5.9 V8.6 H9.8 C9.8 8.6 11.7 8.8 11.7 6 C11.7 3.2 10 3.3 10 3.3 H9 V4.6 C9 4.6 9.1 6.3 7.3 6.3 H4.7 C4.7 6.3 3.1 6.3 3.1 7.9 V10.1 C3.1 10.1 2.8 11.7 6.1 11.7 Z" fill="#f3c93c"/></svg>
<div class="tabt" style="left:123.5px;top:8px;font-style:italic">models.py</div>
<svg style="left:204px;top:9px" width="9" height="11" viewBox="0 0 9 11"><path d="M0 0 H9 L8.2 9.2 L4.5 11 L0.8 9.2 Z" fill="#2d7bd6"/><path d="M2.2 2.2 H6.8 L6.5 7.8 L4.5 8.7 L2.5 7.8 L2.4 6.5 M2.6 4.8 H6.4" stroke="#fff" stroke-width="1" fill="none"/></svg>
<div class="tabt" style="left:219.5px;top:8px">style.css</div>
<svg style="left:299px;top:9px" width="11.5" height="11.5" viewBox="0 0 12 12"><path d="M5.9 0.3 C3.2 0.3 3.4 1.5 3.4 1.5 V2.9 H6.1 V3.4 H2.2 C2.2 3.4 0.3 3.2 0.3 6 C0.3 8.8 2 8.7 2 8.7 H3 V7.4 C3 7.4 2.9 5.7 4.7 5.7 H7.3 C7.3 5.7 8.9 5.7 8.9 4.1 V1.9 C8.9 1.9 9.2 0.3 5.9 0.3 Z" fill="#3b77a8"/><path d="M6.1 11.7 C8.8 11.7 8.6 10.5 8.6 10.5 V9.1 H5.9 V8.6 H9.8 C9.8 8.6 11.7 8.8 11.7 6 C11.7 3.2 10 3.3 10 3.3 H9 V4.6 C9 4.6 9.1 6.3 7.3 6.3 H4.7 C4.7 6.3 3.1 6.3 3.1 7.9 V10.1 C3.1 10.1 2.8 11.7 6.1 11.7 Z" fill="#f3c93c"/></svg>
<div class="tabt" style="left:315.5px;top:8px">views.py</div>
<svg style="left:972.5px;top:9px" width="12" height="11" viewBox="0 0 12 11"><rect x="0.6" y="0.6" width="10.8" height="9.8" rx="1" stroke="#cfcfca" stroke-width="1.1" fill="none"/><path d="M6 0.6V10.4" stroke="#cfcfca" stroke-width="1.1"/></svg>
<div class="abs" style="left:994.0px;top:13px;width:2px;height:2px;background:#cfcfca;border-radius:1px"></div>
<div class="abs" style="left:997.8px;top:13px;width:2px;height:2px;background:#cfcfca;border-radius:1px"></div>
<div class="abs" style="left:1001.6px;top:13px;width:2px;height:2px;background:#cfcfca;border-radius:1px"></div>
<div class="abs" style="left:0;top:27.5px;width:1017px;height:19px;background:#272823"></div>
<div class="tabt" style="left:12.5px;top:31px;color:#b9b9b4">templates</div>
<svg style="left:61px;top:33px" width="6" height="9" viewBox="0 0 6 9"><path d="M0.8 0.6 L4.8 4.5 L0.8 8.4" stroke="#a8a8a3" stroke-width="1.1" fill="none"/></svg>
<div class="tabt" style="left:70.5px;top:31px;color:#b9b9b4">pages</div>
<svg style="left:102px;top:33px" width="6" height="9" viewBox="0 0 6 9"><path d="M0.8 0.6 L4.8 4.5 L0.8 8.4" stroke="#a8a8a3" stroke-width="1.1" fill="none"/></svg>
<div class="dj" style="left:112.5px;top:30.5px">dj</div>
<div class="tabt" style="left:128px;top:31px;color:#b9b9b4">about.html</div>
<div class="abs" style="left:0;top:46.3px;width:1017px;height:1.6px;background:rgba(0,0,0,0.22)"></div>
<div class="abs" style="left:70px;top:95px;width:947px;height:24px;background:#31322c"></div>
<div class="abs" style="left:70px;top:239px;width:1005px;height:24px;background:#37382f;border-top:1px solid #3c3d34;border-bottom:1px solid #3c3d34"></div>
<div class="abs" style="left:70.30000000000001px;top:191px;width:1px;height:288px;background:#45463f"></div>
<div class="abs" style="left:79.0px;top:215px;width:1px;height:264px;background:#45463f"></div>
<div class="abs" style="left:87.80000000000001px;top:239px;width:1px;height:240px;background:#5b5c55"></div>
<div class="abs" style="left:96.80000000000001px;top:311px;width:1px;height:120px;background:#45463f"></div>
<div class="ln" style="top:47px;color:#94948e">14</div>
<div class="cl" style="top:47px;left:70.30px"><span class="p">&lt;/</span><span class="t">section</span><span class="p">&gt;</span></div>
<div class="ln" style="top:71px;color:#94948e">15</div>
<div class="cl" style="top:71px;left:70.30px"><span class="c">&lt;!-- Breadcrumb --&gt;</span></div>
<div class="ln" style="top:95px;color:#94948e">16</div>
<div class="cl" style="top:95px;left:70.30px"><span class="p">&lt;</span><span class="t">section</span> <span class="a">id</span><span class="p">=</span><span class="s">"bc"</span> <span class="a">class</span><span class="p">=</span><span class="s">"mt-3"</span><span class="p">&gt;</span></div>
<div class="ln" style="top:119px;color:#94948e">28</div>
<div class="cl" style="top:119px;left:70.30px"><span class="p">&lt;/</span><span class="t">section</span><span class="p">&gt;</span></div>
<div class="ln" style="top:143px;color:#94948e">29</div>
<div class="cl" style="top:143px;left:70.30px"><span class="c">&lt;!-- About --&gt;</span></div>
<div class="ln" style="top:167px;color:#94948e">30</div>
<div class="cl" style="top:167px;left:70.30px"><span class="p">&lt;</span><span class="t">section</span> <span class="a">id</span><span class="p">=</span><span class="s">"about"</span> <span class="a">class</span><span class="p">=</span><span class="s">"py-4"</span><span class="p">&gt;</span></div>
<div class="ln" style="top:191px;color:#94948e">31</div>
<div class="cl" style="top:191px;left:79.20px"><span class="p">&lt;</span><span class="t">div</span> <span class="a">class</span><span class="p">=</span><span class="s">"container"</span><span class="p">&gt;</span></div>
<div class="ln" style="top:215px;color:#94948e">32</div>
<div class="cl" style="top:215px;left:88.10px"><span class="p">&lt;</span><span class="t">div</span> <span class="a">class</span><span class="p">=</span><span class="s">"row"</span><span class="p">&gt;</span></div>
<div class="ln" style="top:239px;color:#d0d0ca">33</div>
<div class="cl" style="top:239px;left:97.00px"><span class="y">{</span><span class="p">% </span><span class="t">for</span><span class="p"> blog </span><span class="t">in</span><span class="p"> blogs %</span><span class="y">}</span></div>
<div class="ln" style="top:263px;color:#94948e">34</div>
<div class="cl" style="top:263px;left:97.00px"><span class="c">&lt;!-- About Content --&gt;</span></div>
<div class="ln" style="top:287px;color:#94948e">35</div>
<div class="cl" style="top:287px;left:97.00px"><span class="p">&lt;</span><span class="t">div</span> <span class="a">class</span><span class="p">=</span><span class="s">"col-md-8"</span><span class="p">&gt;</span></div>
<div class="ln" style="top:311px;color:#94948e">36</div>
<div class="cl" style="top:311px;left:105.90px"><span class="p">&lt;</span><span class="t">h2</span><span class="p">&gt;</span><span class="p">We Help You Find The Perfect Car</span><span class="p">&lt;/</span><span class="t">h2</span><span class="p">&gt;</span></div>
<div class="ln" style="top:335px;color:#94948e">37</div>
<div class="cl" style="top:335px;left:105.90px"><span class="p">&lt;</span><span class="t">p</span><span class="p">&gt;</span><span class="p"> Posted by: </span><span class="p">&lt;</span><span class="t">span</span> <span class="a">class</span><span class="p">=</span><span class="s">"text-secondary"</span><span class="p">&gt;</span><span class="p">Martin Crow </span><span class="p">&lt;/</span><span class="t">span</span><span class="p">&gt;</span><span class="p"> on: October 20th 2025 at 2:30 pm </span><span class="p">&lt;/</span><span class="t">p</span><span class="p">&gt;</span></div>
<div class="ln" style="top:359px;color:#94948e">38</div>
<div class="cl" style="top:359px;left:105.90px"><span class="p">&lt;</span><span class="t">p</span> <span class="a">class</span><span class="p">=</span><span class="s">"lead"</span><span class="p">&gt;</span><span class="p">From budget-friendly compacts to luxury vehicles, our mission is to make your car buying and selling experience seamless</span></div>
<div class="ln" style="top:383px;color:#94948e">39</div>
<div class="cl" style="top:383px;left:105.90px"><span class="p">&lt;</span><span class="t">img</span> <span class="a">src</span><span class="p">=</span><span class="s">"{% static 'img/cars/car10.jpg' %}"</span> <span class="a">alt</span><span class="p">=</span><span class="s">"About Ozain  Motors"</span> <span class="a">class</span><span class="p">=</span><span class="s">"img-fluid"</span><span class="p">&gt;</span></div>
<div class="ln" style="top:407px;color:#94948e">40</div>
<div class="cl" style="top:407px;left:105.90px"><span class="p">&lt;</span><span class="t">p</span> <span class="a">class</span><span class="p">=</span><span class="s">"mt-4"</span><span class="p">&gt;</span><span class="p">Ozain Motors has been connecting buyers with quality vehicles for years. Whether you're looking for your first car</span></div>
<div class="ln" style="top:431px;color:#94948e">41</div>
<div class="cl" style="top:431px;left:97.00px"><span class="p">&lt;/</span><span class="t">div</span><span class="p">&gt;</span></div>
<div class="ln" style="top:455px;color:#94948e">42</div>
<div class="cl" style="top:455px;left:70.30px"></div>
<svg style="left:61px;top:103px" width="6" height="9" viewBox="0 0 6 9"><path d="M0.8 0.6 L4.8 4.5 L0.8 8.4" stroke="#b0b0ab" stroke-width="1.1" fill="none"/></svg>
<div class="abs" style="left:298px;top:94px;font-family:Liberation Serif;font-size:17.6px;color:#6f6f6a;line-height:24px;letter-spacing:1px">&#8943;</div>
<div class="abs" style="left:97px;top:239px;width:9px;height:23px;border:1px solid #75766e"></div>
<div class="abs" style="left:260px;top:239px;width:9px;height:23px;border:1px solid #75766e"></div>
<div class="abs" style="left:269px;top:240px;width:1.5px;height:22px;background:#f8f8f0"></div>
<div class="abs" style="left:8.5px;top:222.6px;width:7px;height:7px;border-radius:50%;background:#f01a08"></div>
<div class="abs" style="left:8.5px;top:414.6px;width:7px;height:7px;border-radius:50%;background:#f01a08"></div>
<div class="abs" style="left:1005px;top:46.5px;width:1px;height:433px;background:rgba(20,20,18,0.35)"></div>
<div class="abs" style="left:1006px;top:103px;width:11px;height:79px;background:rgba(121,121,110,0.45)"></div>
<div class="abs" style="left:1006px;top:137px;width:11px;height:1.5px;background:#d0d0cc"></div>
<div class="abs" style="left:70px;top:468.5px;width:362px;height:10px;background:#4a4b45"></div>
</div>
<svg style="left:595px;top:283px" width="6" height="13" viewBox="0 0 6 13"><path d="M0.5 0.5 H5.5 M3 0.5 V12.5 M0.5 12.5 H5.5" stroke="#8e8e8a" stroke-width="0.9"/></svg>
<div class="abs" style="left:488px;top:352px;width:307px;font-size:16px;line-height:16px;color:rgba(200,200,195,0.06);-webkit-text-stroke:0.6px rgba(205,205,200,0.4);transform:rotate(-44.6deg);transform-origin:50% 50%;white-space:nowrap">Copyright &#169; 2026 - www.p30download.com</div>
<div id="panel" class="abs"></div>
<div class="abs" style="left:263px;top:518.5px;width:1017px;height:1px;background:#3b3c36"></div>
<div class="ptab" style="left:278.7px;color:#8a8a85">PROBLEMS</div>
<div class="ptab" style="left:340.6px;color:#8a8a85">OUTPUT</div>
<div class="ptab" style="left:392.8px;color:#8a8a85">DEBUG CONSOLE</div>
<div class="ptab" style="left:480.3px;color:#e6e6e1">TERMINAL</div>
<div class="ptab" style="left:540.6px;color:#8a8a85">PORTS</div>
<div class="abs" style="left:479.5px;top:540.5px;width:43px;height:1px;background:#b4b4af"></div>
<div class="term" style="left:279px;top:556.7px"><span style="color:#a6e22e">(venv)</span> PS D:\Development\root-django&gt; <span style="color:#e6db74">python</span> manage.py runserver</div>
<div class="abs" style="left:263px;top:575px;width:1005px;height:1.2px;background:#141512;box-shadow:0 1px 2px rgba(0,0,0,0.4)"></div>
<div class="term" style="left:279px;top:577.5px">[03/Nov/2025 21:53:56] "GET /media/photos/agents/25/10/18/Paul_Collingwood.png HTTP/1.1" 200 156062</div>
<div class="term" style="left:279px;top:596.0px">[03/Nov/2025 21:53:56] "GET /media/photos/agents/25/10/18/Shane_Bond.png HTTP/1.1" 200 147862</div>
<div class="term" style="left:279px;top:614.7px">[03/Nov/2025 21:53:56] "GET /media/photos/agents/25/10/18/Shoaib_Akhtar.png HTTP/1.1" 200 151234</div>
<div class="term" style="left:279px;top:633.3px">[03/Nov/2025 21:53:56] "GET /static/webfonts/fa-solid-900.woff2 HTTP/1.1" 200 67400</div>
<div class="term" style="left:279px;top:651.8px">[03/Nov/2025 21:53:56] "GET /static/webfonts/fa-brands-400.woff2 HTTP/1.1" 200 65316</div>
<div class="abs" style="left:279px;top:669.5px;width:8.5px;height:17.5px;border:1px solid #d0d0cb"></div>
<div id="status" class="abs"></div>
<div class="abs" style="left:0;top:688px;width:27.5px;height:17px;background:#c86c1c"></div>
<svg style="left:9.5px;top:690.5px" width="9" height="12" viewBox="0 0 9 12"><path d="M0.8 3.5 L4.2 6.9 L0.8 10.4 M8 1 L4.6 4.4 L8 7.6" stroke="#f4e8d8" stroke-width="1.1" fill="none"/></svg>
<svg style="left:34px;top:691px" width="11" height="11" viewBox="0 0 11 11"><circle cx="5.5" cy="5.5" r="4.8" stroke="#e0e0dc" stroke-width="1" fill="none"/><path d="M3.5 3.5 L7.5 7.5 M7.5 3.5 L3.5 7.5" stroke="#e0e0dc" stroke-width="1"/></svg>
<div class="st" style="left:47.5px;top:692.5px;font-size:10px">0</div>
<svg style="left:56px;top:691px" width="11" height="10" viewBox="0 0 11 10"><path d="M5.5 0.8 L10.3 9.3 H0.7 Z M5.5 3.5 V6.5 M5.5 7.4 V8.3" stroke="#e0e0dc" stroke-width="1" fill="none" stroke-linejoin="round"/></svg>
<div class="st" style="left:69px;top:692.5px;font-size:10px">0</div>
<div class="abs" style="left:32px;top:705px;width:191px;height:2px;background:#5f5f5a"></div>
<div class="abs" style="left:791.5px;top:688px;width:28.5px;height:17px;background:#3a3b34"></div>
<svg style="left:801px;top:691px" width="11" height="11" viewBox="0 0 11 11"><circle cx="4.5" cy="4.5" r="3.7" stroke="#e0e0dc" stroke-width="1" fill="none"/><path d="M7.2 7.2 L10.5 10.5 M4.5 2.8 V6.2 M2.8 4.5 H6.2" stroke="#e0e0dc" stroke-width="1"/></svg>
<div class="st" style="left:825.5px">Ln 33, Col 30</div>
<div class="st" style="left:892.5px">Spaces: 2</div>
<div class="st" style="left:944.5px">UTF-8</div>
<div class="st" style="left:983px">CRLF</div>
<div class="st" style="left:1032.5px">Django Template</div>
<div class="st" style="left:1017px;top:691.5px;font-size:9.5px">{ }</div>
<svg style="left:1117px;top:691px" width="12" height="10" viewBox="0 0 12 10"><path d="M2 3 Q2 1 6 1 Q10 1 10 3 V7 Q10 9 6 9 Q2 9 2 7 Z M4 4.5 V6 M8 4.5 V6" stroke="#d8d8d2" stroke-width="1" fill="none"/></svg>
<svg style="left:1141px;top:691.5px" width="10" height="10" viewBox="0 0 10 10"><circle cx="5" cy="4" r="3.3" stroke="#c8c8c3" stroke-width="1" fill="none"/><path d="M5 4 V9.5" stroke="#c8c8c3" stroke-width="1"/></svg>
<div class="st" style="left:1154px;color:#cdcdc8">Go Live</div>
<svg style="left:1198px;top:692px" width="12" height="9" viewBox="0 0 12 9"><path d="M0.5 4.5 L3 8 L8 0.5 M5 7 L6 8 L11 0.5" stroke="#d8d8d2" stroke-width="1" fill="none"/></svg>
<div class="st" style="left:1211px">Prettier</div>
<svg style="left:1256px;top:690.5px" width="10" height="12" viewBox="0 0 10 12"><path d="M1 8.5 H9 L8 7 V4.5 Q8 1.2 5 1.2 Q2 1.2 2 4.5 V7 Z M3.8 10.2 H6.2" stroke="#d8d8d2" stroke-width="1" fill="none"/></svg>
<svg style="left:1007px;top:430px;mix-blend-mode:screen" width="280" height="280" viewBox="0 0 280 280">
<defs>
 <linearGradient id="ring2" x1="0.55" y1="0" x2="0.3" y2="1">
  <stop offset="0" stop-color="#e040ff"/><stop offset="0.35" stop-color="#a830ea"/><stop offset="0.65" stop-color="#6030e0"/><stop offset="1" stop-color="#2048f0"/>
 </linearGradient>
 <filter id="blur2" x="-30%" y="-30%" width="160%" height="160%"><feGaussianBlur stdDeviation="5"/></filter>
</defs>
<circle cx="140" cy="140" r="123" stroke="url(#ring2)" stroke-width="10" fill="none" filter="url(#blur2)" opacity="0.75"/>
</svg>
<svg style="left:1007px;top:430px" width="280" height="280" viewBox="0 0 280 280">
<defs>
 <clipPath id="cc"><circle cx="140" cy="140" r="118"/></clipPath>
 <linearGradient id="ring" x1="0.55" y1="0" x2="0.3" y2="1">
  <stop offset="0" stop-color="#ffc0ff"/><stop offset="0.3" stop-color="#cc5cf8"/><stop offset="0.6" stop-color="#7a3cf0"/><stop offset="0.85" stop-color="#3f4cf5"/><stop offset="1" stop-color="#2a66ff"/>
 </linearGradient>
 <filter id="blur" x="-30%" y="-30%" width="160%" height="160%"><feGaussianBlur stdDeviation="6"/></filter>
 <filter id="b1" x="-30%" y="-30%" width="160%" height="160%"><feGaussianBlur stdDeviation="0.8"/></filter>
 <filter id="soft" x="-5%" y="-5%" width="110%" height="110%"><feGaussianBlur stdDeviation="0.7"/></filter>
 <linearGradient id="wall" x1="0" y1="0" x2="1" y2="0"><stop offset="0" stop-color="#c3c5c3"/><stop offset="0.2" stop-color="#d3d4d2"/><stop offset="0.45" stop-color="#e2e3e1"/><stop offset="1" stop-color="#eaebea"/></linearGradient>
 <radialGradient id="face" cx="0.55" cy="0.45" r="0.6"><stop offset="0" stop-color="#cfa08a"/><stop offset="1" stop-color="#a9806c"/></radialGradient>
</defs>
<g clip-path="url(#cc)"><g filter="url(#soft)">
 <rect x="0" y="0" width="280" height="280" fill="url(#wall)"/>
 <rect x="20" y="0" width="33" height="280" fill="#d2d3d1"/>
 <path d="M96 18 L128 26 L146 42 L162 30 L162 0 L96 0 Z" fill="#d4d6cc"/>
 <rect x="128" y="34" width="17" height="112" fill="#bfc1ad"/>
 <rect x="128" y="34" width="5" height="112" fill="#cdcfbe"/>
 <path d="M162 27 L200 19 L201 45 L166 53 Z" fill="#f1f2f2"/>
 <path d="M169 43 L195 36 L196 40 L170 47 Z" fill="#3a3c40"/>
 <rect x="235" y="74" width="24" height="142" fill="#d9b0c0"/>
 <path d="M242 105 Q248 96 254 94 M240 140 Q247 130 254 128 M242 175 Q248 166 254 164 M240 205 Q246 198 252 196" stroke="#8a4a5c" stroke-width="2.2" fill="none"/>
 <path d="M31 206 L36 182 L42 206 M36 182 V176" stroke="#2a2a2e" stroke-width="2" fill="none"/>
 <rect x="62" y="174" width="16" height="30" rx="3" fill="#35363b"/>
 <path d="M186 204 L214 198 L240 214 L216 230 L184 236 Z" fill="#a4a6aa"/>
 <path d="M180 204 Q200 214 216 216 L230 214 Q236 218 232 224 L214 228 Q196 226 178 216 Z" fill="#bb8e78"/>
 <path d="M58 262 L62 214 Q64 182 80 168 Q100 156 122 146 L132 143 Q146 156 160 145 L172 148 Q187 153 192 166 Q197 186 198 204 L186 208 L178 214 L172 262 Z" fill="#1f2752"/>
 <path d="M72 212 Q78 184 92 168 L98 171 Q86 188 82 214 Z" fill="#485a88" opacity="0.75"/>
 <path d="M58 214 L82 216 L86 240 L64 242 Z" fill="#b58a74"/>
 <path d="M126 124 L127 146 Q142 158 160 147 L159 124 Z" fill="#a47a66"/>
 <ellipse cx="146" cy="114" rx="19" ry="26" fill="#a97f6b"/>
 <ellipse cx="155" cy="110" rx="20" ry="30" fill="url(#face)"/>
 <ellipse cx="130" cy="118" rx="5" ry="8.5" fill="#a97f6b"/>
 <path d="M114 112 Q110 80 137 72 Q162 67 172 84 Q162 84 151 87 Q139 93 134 106 L130 128 Q118 127 114 112 Z" fill="#222226"/>
 <path d="M132 106 L178 101" stroke="#8a8e94" stroke-width="1.2" fill="none"/>
 <ellipse cx="169" cy="104" rx="10" ry="4.5" stroke="#6a6e74" stroke-width="1" fill="none"/>
 <path d="M130 150 Q142 192 157 152" stroke="#e0e0d8" stroke-width="1.3" fill="none"/>
 <path d="M168 186 L176 184" stroke="#c8c8cc" stroke-width="1.3"/>
 <path d="M110 256 L216 228 L252 232 L252 290 L110 290 Z" fill="#2a2d31"/>
 <path d="M110 256 L216 228" stroke="#e6e6e6" stroke-width="1.8"/>
</g></g>
<circle cx="140" cy="140" r="119.2" stroke="url(#ring)" stroke-width="2.6" fill="none" filter="url(#b1)"/>
</svg>
<svg style="left:1258px;top:529px" width="8" height="8" viewBox="0 0 8 8"><path d="M0.5 0.5 L7.5 7.5 M7.5 0.5 L0.5 7.5" stroke="#b9a6d6" stroke-width="1"/></svg>
<svg style="left:1263px;top:550px" width="9" height="9" viewBox="0 0 9 9"><path d="M4.5 0.8 L8.5 8.3 H0.5 Z" stroke="#a99ac0" stroke-width="0.9" fill="none"/></svg>
<div class="abs" style="left:1228px;top:698px;font-size:12.4px;font-weight:bold;color:rgba(205,205,202,0.7);line-height:14px;letter-spacing:0.2px">udemy</div>
</body></html>
